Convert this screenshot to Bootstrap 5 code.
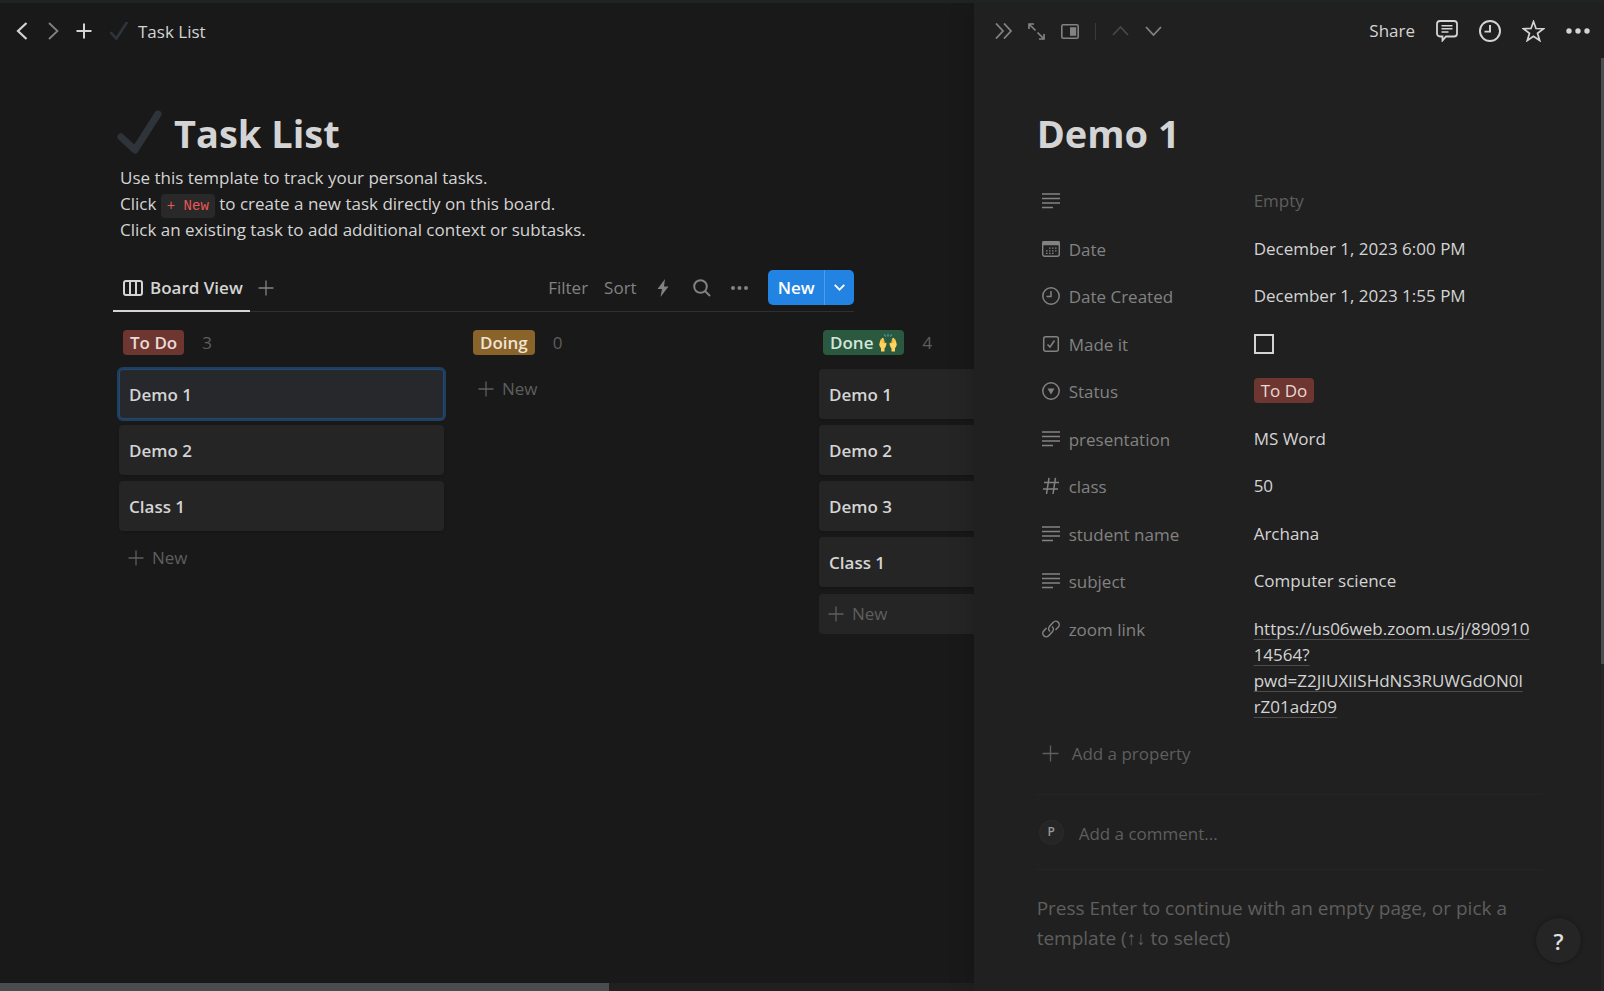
<!DOCTYPE html>
<html lang="en" data-bs-theme="dark">
<head>
<meta charset="utf-8">
<meta name="viewport" content="width=device-width, initial-scale=1">
<title>Task List</title>
<link href="https://cdn.jsdelivr.net/npm/bootstrap@5.3.0/dist/css/bootstrap.min.css" rel="stylesheet">
<style>
  :root { --ink:#d4d4d4; --mid:#828282; --faint:#5e5e5e; --page:#191919; --panel:#202020; --tile:#252525; --thumb:#494d50; }
  body { font-family:"Open Sans","Noto Sans",sans-serif; font-size:17px; line-height:26px; color:var(--ink); background:var(--page); }
  svg { display:block; flex:none; fill:none; stroke:currentColor; }
  h1 { font-size:38px; line-height:48px; font-weight:700; margin:0; color:var(--ink); }
  .app { border-top:3px solid #1f2322; }
  .workspace { min-width:0; }
  .side-peek { flex:0 0 39.3%; background:var(--panel); box-shadow:0 0 24px rgba(0,0,0,.2); z-index:2; }
  .topbar { height:56px; flex:none; }
  .trail { padding-left:16px; gap:16px; }
  .history { gap:20px; }
  .crumb { gap:8px; padding-top:2px; }
  .check-mark { color:#2f343b; }
  .plain { background:none; border:0; padding:0; color:inherit; display:inline-flex; align-items:center; text-align:left; }
  .mid { color:var(--mid); }
  .faint { color:var(--faint); }
  .page-head { padding:50px 120px 0 113px; }
  .intro { padding:8px 0 0 7px; margin-bottom:21px; }
  .chip { font:14px/14px "Liberation Mono",monospace; color:#eb5757; background:#292929; border-radius:4px; padding:4px 6px; }
  .toolbar { height:48px; border-bottom:1px solid #2f2f2f; }
  .view-tab { height:48px; padding:2px 7px 0 10px; gap:7px; font-weight:600; border-bottom:2px solid var(--ink); margin-bottom:-1px; }
  .tools { gap:16px; }
  .new-btn { background:#2383e2; color:#fff; height:35px; border:0; font-weight:600; padding:0 10px; border-radius:5px; font-size:17px; line-height:35px; }
  .new-btn:hover { background:#1b75d0; color:#fff; }
  .new-btn + .new-btn { border-left:1px solid #4f9be7; padding:0 9px; }
  .board { padding:18px 0 0 119px; gap:25px; }
  .lane { flex:0 0 325px; }
  .lane-head { padding-left:4px; gap:18px; margin-bottom:14px; height:25px; }
  .tag { height:25px; border-radius:4px; padding:1px 7px 0; line-height:24px; display:inline-flex; align-items:center; gap:6px; }
  .tag-red { background:#6e3630; color:#ead9d7; }
  .tag-amber { background:#89632a; color:#efe4d3; }
  .tag-green { background:#2b593f; color:#d5e5db; }
  .task { height:50px; margin-bottom:6px; padding:2px 10px 0; background:var(--tile); border-radius:4px; font-weight:600; width:100%; box-shadow:0 1px 3px rgba(0,0,0,.2); }
  .task.active { background:#26282b; box-shadow:0 0 0 2px #1f3f60, inset 0 0 0 1px #23496f; }
  .add-row { height:40px; padding:0 9px; gap:8px; width:100%; color:var(--faint); border-radius:4px; margin-top:1px; }
  .lane-empty .add-row { margin-top:0; }
  .add-row.filled { background:var(--tile); }
  .h-track { height:8px; background:#202020; }
  .h-thumb { height:8px; width:62.5%; background:var(--thumb); }
  .v-track { width:3px; top:55px; bottom:0; right:0; background:#252525; }
  .v-thumb { height:65%; background:var(--thumb); }
  .peek-bar { padding:0 14px 0 21px; }
  .peek-actions { gap:21px; }
  .rule { width:1px; height:17px; background:#3a3a3a; }
  .off { color:#474747; }
  .peek-body { padding:50px 62px 0 63px; }
  .props { padding-top:24px; }
  .prop { padding:7px 0; margin-bottom:6px; }
  .prop:nth-child(odd) { margin-bottom:7px; }
  .prop-name { flex:0 0 217px; padding:1px 0 0 5px; gap:9px; color:var(--mid); height:27px; }
  .prop-name svg { margin-top:-2px; }
  .prop-value { min-width:0; }
  .zoom-url { color:var(--ink); text-decoration:underline; text-decoration-color:#4c4c4c; text-decoration-thickness:1px; text-underline-offset:4px; }
  .box { appearance:none; width:20px; height:20px; border:2px solid var(--ink); display:block; margin:3px 0; background:none; }
  .add-prop { height:41px; padding-left:5px; gap:13px; color:var(--faint); }
  .comment { height:76px; margin-top:20px; border-top:1px solid #252525; border-bottom:1px solid #252525; padding-left:2px; gap:15px; }
  .comment input { background:none; border:0; outline:0; padding:4px 0 0; color:var(--ink); }
  .comment input::placeholder { color:var(--faint); opacity:1; }
  .who { width:25px; height:25px; border:1px solid #2c2c2c; background:#252525; border-radius:50%; font-size:12px; font-weight:600; color:#9a9a9a; }
  .hint { font-size:19px; line-height:30px; padding-top:23px; margin:0; color:var(--faint); }
  .help { width:45px; height:45px; right:23px; bottom:28px; border-radius:50%; background:#252525; border:0; color:#e0e0e0; font-size:22px; font-weight:600; box-shadow:0 0 4px rgba(0,0,0,.35); }
</style>
</head>
<body>
<svg class="d-none" aria-hidden="true">
  <symbol id="plus" viewBox="0 0 16 16"><path d="M8 .5v15M.5 8h15"/></symbol>
  <symbol id="lines" viewBox="0 0 18 16"><path d="M0 1h18M0 5.500h18M0 10h18M0 14.500h11" stroke-width="1.300"/></symbol>
  <symbol id="clock" viewBox="0 0 18 18"><circle cx="9" cy="9" r="8.200"/><path d="M9 4v5.500H4.500"/></symbol>
</svg>

<div class="app d-flex vh-100 overflow-hidden">
  <main class="workspace flex-grow-1 overflow-hidden d-flex flex-column">
    <nav class="topbar trail d-flex align-items-center" aria-label="Breadcrumb">
      <div class="history d-flex align-items-center">
        <button class="plain" aria-label="Back"><svg width="12" height="18" viewBox="0 0 12 18" stroke-width="2.200"><path d="M10.500 1 2 9l8.500 8"/></svg></button>
        <button class="plain mid" aria-label="Forward"><svg width="12" height="18" viewBox="0 0 12 18" stroke-width="1.800"><path d="M1 1l8.500 8L1 17"/></svg></button>
      </div>
      <button class="plain" aria-label="New page"><svg width="16" height="16" stroke-width="2"><use href="#plus"/></svg></button>
      <a href="#" class="crumb d-flex align-items-center text-decoration-none text-reset">
        <svg class="check-mark" width="22" height="20" viewBox="0 0 46 46" stroke-width="6" stroke-linecap="round" stroke-linejoin="round"><path d="M5 25l12 13L41 1"/></svg>
        Task List</a>
    </nav>

    <header class="page-head">
      <div class="d-flex align-items-center gap-2">
        <svg class="check-mark" width="53" height="48" viewBox="0 0 53 48" stroke-width="7" stroke-linecap="round" stroke-linejoin="round"><path d="M8 28l14 13L45 5"/></svg>
        <h1>Task List</h1>
      </div>
      <p class="intro">Use this template to track your personal tasks.<br>Click <code class="chip">+ New</code> to create a new task directly on this board.<br>Click an existing task to add additional context or subtasks.</p>
      <div class="toolbar d-flex align-items-center justify-content-between">
        <div class="d-flex align-items-center gap-2">
          <button class="plain view-tab"><svg width="20" height="16" viewBox="0 0 20 16" stroke-width="2"><rect x="1" y="1" width="18" height="14" rx="2"/><path d="M7 1v14M13 1v14"/></svg>Board View</button>
          <button class="plain mid" aria-label="Add view"><svg width="16" height="16" stroke-width="1.300"><use href="#plus"/></svg></button>
        </div>
        <div class="tools d-flex align-items-center mid">
          <button class="plain">Filter</button>
          <button class="plain">Sort</button>
          <button class="plain ms-1" aria-label="Automations"><svg width="12" height="18" viewBox="0 0 12 18"><path d="M8 0 .5 10H5L3.500 18 11.500 7.500H7z" fill="currentColor" stroke="none"/></svg></button>
          <button class="plain ms-2" aria-label="Search"><svg width="18" height="18" viewBox="0 0 18 18" stroke-width="2"><circle cx="7.500" cy="7.500" r="6.300"/><path d="M12 12l5 5"/></svg></button>
          <button class="plain ms-1" aria-label="More"><svg width="17" height="4" viewBox="0 0 17 4"><g fill="currentColor" stroke="none"><circle cx="2" cy="2" r="2"/><circle cx="8.500" cy="2" r="2"/><circle cx="15" cy="2" r="2"/></g></svg></button>
          <div class="btn-group ms-1">
            <button class="btn new-btn">New</button>
            <button class="btn new-btn" aria-label="New from template"><svg width="11" height="7" viewBox="0 0 11 7" stroke-width="1.800"><path d="M.7.9l4.800 4.800L10.300.9"/></svg></button>
          </div>
        </div>
      </div>
    </header>

    <section class="board d-flex flex-grow-1">
      <div class="lane">
        <div class="lane-head d-flex align-items-center"><span class="tag tag-red fw-semibold">To Do</span><span class="faint">3</span></div>
        <button class="plain task active">Demo 1</button>
        <button class="plain task">Demo 2</button>
        <button class="plain task">Class 1</button>
        <button class="plain add-row"><svg width="16" height="16" stroke-width="1.300"><use href="#plus"/></svg>New</button>
      </div>
      <div class="lane lane-empty">
        <div class="lane-head d-flex align-items-center"><span class="tag tag-amber fw-semibold">Doing</span><span class="faint">0</span></div>
        <button class="plain add-row"><svg width="16" height="16" stroke-width="1.300"><use href="#plus"/></svg>New</button>
      </div>
      <div class="lane">
        <div class="lane-head d-flex align-items-center"><span class="tag tag-green fw-semibold">Done
          <svg width="18" height="18" viewBox="0 0 18 18" role="img" aria-label="Raising hands"><g fill="#ffd35c" stroke="none"><path d="M2 17.500v-3L.2 11 .8 8l.9-2.500 1-.8.8-1 1 .6.6 1.300.7 4 1-1 .8.800-.8 3.100-1.300 2v3z"/><path d="M16 17.500v-3l1.800-3.500-.6-3-.9-2.500-1-.8-.8-1-1 .6-.6 1.300-.7 4-1-1-.8.800.8 3.100 1.300 2v3z"/></g><path d="M2.700 5.500l.6 3.500M4.300 5l.3 3.500M15.300 5.500l-.6 3.500M13.700 5l-.3 3.500" stroke="#dca52e" stroke-width=".6"/><path d="M5.500.5l1 2M9 0v2.500M12.500.5l-1 2" stroke="#5bb4d8" stroke-width="1"/></svg></span><span class="faint">4</span></div>
        <button class="plain task">Demo 1</button>
        <button class="plain task">Demo 2</button>
        <button class="plain task">Demo 3</button>
        <button class="plain task">Class 1</button>
        <button class="plain add-row filled"><svg width="16" height="16" stroke-width="1.300"><use href="#plus"/></svg>New</button>
      </div>
    </section>
    <div class="h-track"><div class="h-thumb"></div></div>
  </main>

  <aside class="side-peek position-relative">
    <div class="topbar peek-bar d-flex align-items-center justify-content-between">
      <div class="d-flex align-items-center mid gap-3">
        <button class="plain" aria-label="Close peek"><svg width="17" height="16" viewBox="0 0 17 16" stroke-width="1.800"><path d="M1 .5L8 8l-7 7.500M9 .5L16 8l-7 7.500"/></svg></button>
        <button class="plain" aria-label="Open as page"><svg width="17" height="17" viewBox="0 0 17 17" stroke-width="1.700"><path d="M1 6V1h5M1 1l6.500 6.500M16 11v5h-5M16 16L9.500 9.500"/></svg></button>
        <button class="plain" aria-label="Peek mode"><svg width="18" height="15" viewBox="0 0 18 15" stroke-width="1.600"><rect x=".8" y=".8" width="16.400" height="13.400" rx="1.500"/><path d="M9 3.200h6.200v8.600H9z" fill="currentColor" stroke="none"/></svg></button>
        <div class="rule"></div>
        <button class="plain off" aria-label="Previous"><svg width="17" height="10" viewBox="0 0 17 10" stroke-width="1.800"><path d="M1 9l7.500-8L16 9"/></svg></button>
        <button class="plain" aria-label="Next"><svg width="17" height="10" viewBox="0 0 17 10" stroke-width="1.800"><path d="M1 1l7.500 8L16 1"/></svg></button>
      </div>
      <div class="peek-actions d-flex align-items-center">
        <button class="plain">Share</button>
        <button class="plain" aria-label="Comments"><svg width="22" height="22" viewBox="0 0 22 22" stroke-width="1.800"><path d="M4 1h14a3 3 0 0 1 3 3v9.500a3 3 0 0 1-3 3h-8L6.500 20.500v-4H4a3 3 0 0 1-3-3V4a3 3 0 0 1 3-3z"/><path d="M5.500 5.700h11M5.500 8.800h11M5.500 12h7" stroke-width="1.400"/></svg></button>
        <button class="plain" aria-label="Updates"><svg width="22" height="22" stroke-width="1.600"><use href="#clock"/></svg></button>
        <button class="plain" aria-label="Favorite"><svg width="23" height="22" viewBox="0 0 23 22" stroke-width="1.700"><path d="M11.500 1.500l2.500 7 7.500.2-6 4.500 2.200 7.300-6.200-4.300-6.200 4.300 2.200-7.300-6-4.500 7.500-.2z"/></svg></button>
        <button class="plain" aria-label="More"><svg width="24" height="6" viewBox="0 0 24 6"><g fill="currentColor" stroke="none"><circle cx="3" cy="3" r="2.700"/><circle cx="12" cy="3" r="2.700"/><circle cx="21" cy="3" r="2.700"/></g></svg></button>
      </div>
    </div>

    <div class="peek-body">
      <h1>Demo 1</h1>
      <div class="props">
        <div class="prop d-flex align-items-start"><div class="prop-name d-flex align-items-center"><svg width="18" height="16"><use href="#lines"/></svg></div><div class="prop-value faint">Empty</div></div>
        <div class="prop d-flex align-items-start"><div class="prop-name d-flex align-items-center"><svg width="18" height="16" viewBox="0 0 18 16" stroke-width="1.400"><rect x=".7" y=".7" width="16.600" height="14.600" rx="2"/><path d="M1 1h16v2.500H1z" fill="currentColor"/><path d="M7 7.200h8M4 9.800h11M4 12.300h8" stroke-width="1.200" stroke-dasharray="1.500 1.500"/></svg>Date</div><div class="prop-value">December 1, 2023 6:00 PM</div></div>
        <div class="prop d-flex align-items-start"><div class="prop-name d-flex align-items-center"><svg width="18" height="18" stroke-width="1.500"><use href="#clock"/></svg>Date Created</div><div class="prop-value">December 1, 2023 1:55 PM</div></div>
        <div class="prop d-flex align-items-start"><label class="prop-name d-flex align-items-center" for="made"><svg width="18" height="16" viewBox="0 0 18 16" stroke-width="1.500"><rect x="1.700" y=".8" width="14.600" height="14.400" rx="2"/><path d="M5.500 8.500L8 11l4.500-6.500"/></svg>Made it</label><div class="prop-value"><input class="box" type="checkbox" id="made"></div></div>
        <div class="prop d-flex align-items-start"><div class="prop-name d-flex align-items-center"><svg width="18" height="18" viewBox="0 0 18 18" stroke-width="1.500"><circle cx="9" cy="9" r="8.200"/><path d="M5.500 6.500h7L9 12.500z" fill="currentColor" stroke="none"/></svg>Status</div><div class="prop-value"><span class="tag tag-red">To Do</span></div></div>
        <div class="prop d-flex align-items-start"><div class="prop-name d-flex align-items-center"><svg width="18" height="16"><use href="#lines"/></svg>presentation</div><div class="prop-value">MS Word</div></div>
        <div class="prop d-flex align-items-start"><div class="prop-name d-flex align-items-center"><svg width="18" height="18" viewBox="0 0 18 18" stroke-width="1.500"><path d="M7 .8L4.500 17M13.500.8L11 17M2 5.500h15M1 12h15"/></svg>class</div><div class="prop-value">50</div></div>
        <div class="prop d-flex align-items-start"><div class="prop-name d-flex align-items-center"><svg width="18" height="16"><use href="#lines"/></svg>student name</div><div class="prop-value">Archana</div></div>
        <div class="prop d-flex align-items-start"><div class="prop-name d-flex align-items-center"><svg width="18" height="16"><use href="#lines"/></svg>subject</div><div class="prop-value">Computer science</div></div>
        <div class="prop d-flex align-items-start"><div class="prop-name d-flex align-items-center"><svg width="18" height="18" viewBox="0 0 18 18" stroke-width="1.500"><path d="M8 11.500a3.500 3.500 0 0 1-.6-4.900l3.700-4.200a3.500 3.500 0 0 1 5.200 4.700L13.500 10"/><path d="M10 6.500a3.500 3.500 0 0 1 .6 4.900l-3.700 4.200a3.500 3.500 0 0 1-5.200-4.700L4.500 8"/></svg>zoom link</div><div class="prop-value"><a class="zoom-url" href="#">https://us06web.zoom.us/j/890910<br>14564?<br>pwd=Z2JIUXlISHdNS3RUWGdON0l<br>rZ01adz09</a></div></div>
      </div>
      <button class="plain add-prop"><svg width="17" height="17" stroke-width="1.300"><use href="#plus"/></svg>Add a property</button>
      <div class="comment d-flex align-items-center">
        <span class="who d-flex align-items-center justify-content-center">P</span>
        <input class="flex-grow-1" type="text" aria-label="Add a comment" placeholder="Add a comment...">
      </div>
      <p class="hint">Press Enter to continue with an empty page, or pick a template (↑↓ to select)</p>
    </div>
    <button class="help position-absolute" aria-label="Help">?</button>
    <div class="v-track position-absolute"><div class="v-thumb"></div></div>
  </aside>
</div>
<script src="https://cdn.jsdelivr.net/npm/bootstrap@5.3.0/dist/js/bootstrap.bundle.min.js"></script>
</body>
</html>
